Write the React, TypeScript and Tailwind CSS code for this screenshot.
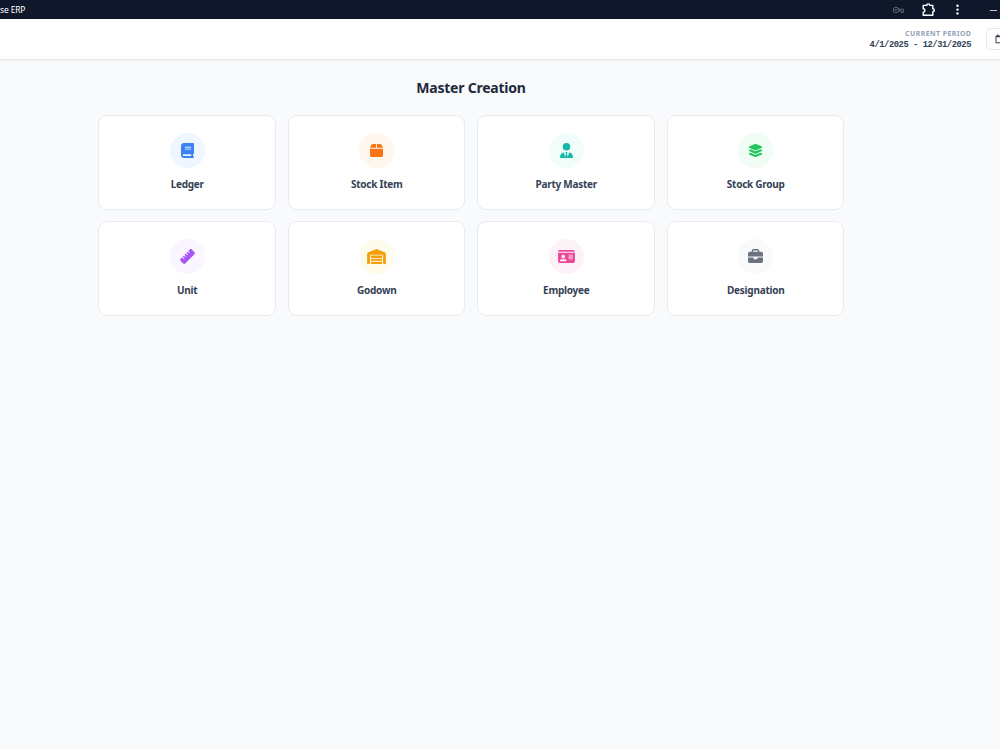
import React from "react";
import {
    FaBook,
    FaBox,
    FaBriefcase,
    FaIdCard,
    FaLayerGroup,
    FaRuler,
    FaUserTie,
    FaWarehouse,
} from "react-icons/fa6";

const masters = [
    { label: "Ledger", icon: FaBook, color: "text-[#3b82f6]", bg: "bg-[#eff6ff]", size: "w-[13px]" },
    { label: "Stock Item", icon: FaBox, color: "text-[#f97316]", bg: "bg-[#fff7ed]", size: "w-[13px]" },
    { label: "Party Master", icon: FaUserTie, color: "text-[#14b8a6]", bg: "bg-[#f0fdfa]", size: "w-[13px]" },
    { label: "Stock Group", icon: FaLayerGroup, color: "text-[#22c55e]", bg: "bg-[#f0fdf4]", size: "w-[15px]" },
    { label: "Unit", icon: FaRuler, color: "text-[#a855f7]", bg: "bg-[#faf5ff]", size: "w-[15px]" },
    { label: "Godown", icon: FaWarehouse, color: "text-[#f59e0b]", bg: "bg-[#fffbeb]", size: "w-[19px]" },
    { label: "Employee", icon: FaIdCard, color: "text-[#ec4899]", bg: "bg-[#fdf2f8]", size: "w-[17px]" },
    { label: "Designation", icon: FaBriefcase, color: "text-[#6b7280]", bg: "bg-[#f9fafb]", size: "w-[15px]" },
];

const TitleBar = () => {
    return (
        <div className="h-[19px] bg-[#0f172a] flex items-center justify-between text-white">
            <span className="text-[8.5px] leading-none tracking-[-0.15px] pt-px">se ERP</span>
            <div className="flex items-center h-full">
                {/* Saved password key */}
                <svg className="w-3 h-2 mr-[17px] text-[#626978]" viewBox="0 0 12 8" fill="none" stroke="currentColor">
                    <circle cx="3.9" cy="4" r="2.7" />
                    <circle cx="3.9" cy="4" r="0.9" fill="currentColor" stroke="none" />
                    <path d="M6.6 3.2h4.7v3.3H9.2V4.8H6.4" />
                </svg>
                {/* Extensions */}
                <svg className="w-[14px] h-[14px] mr-[21px]" viewBox="0 0 14 14" fill="none" stroke="currentColor" strokeWidth="1.4" strokeLinejoin="round">
                    <path d="M2.2 2.4h3.6a1.5 1.5 0 0 1 3 0h3v3.4a1.5 1.5 0 0 1 0 3v3.5H2.2V9.2a1.7 1.7 0 0 0 0-3.4z" />
                </svg>
                <svg className="w-[3px] h-[11px] mr-[31px]" viewBox="0 0 3 11" fill="currentColor">
                    <circle cx="1.5" cy="1.8" r="1.2" />
                    <circle cx="1.5" cy="5.6" r="1.2" />
                    <circle cx="1.5" cy="9.4" r="1.2" />
                </svg>
                <div className="w-[7px] h-px mr-[3px] mt-px bg-[#c3c6cd]" />
            </div>
        </div>
    );
};

const Header = () => {
    return (
        <div className="h-[41px] bg-white border-b border-[#e2e5ea] shadow-[0_1px_1px_rgba(0,0,0,0.03)] flex items-center justify-end">
            <div className="text-right mr-[15px]">
                <p className="text-[7px] leading-[11px] font-bold tracking-[0.4px] -mr-[0.4px] text-[#94a3b8]">CURRENT PERIOD</p>
                <p className="font-['Liberation_Mono',monospace] text-[8.8px] leading-[12px] font-bold tracking-[-0.45px] text-[#334155] whitespace-pre">
                    4/1/2025 - 12/31/2025
                </p>
            </div>
            {/* Date button runs past the right edge of the window */}
            <div className="w-[14px] h-[22px] border border-r-0 border-[#e2e8f0] rounded-l-[5px] flex items-center pl-2 overflow-hidden">
                <svg className="w-[9px] h-[10px] shrink-0 text-[#334155]" viewBox="0 0 9 10" fill="none" stroke="currentColor">
                    <path d="M1 2h7v6.8H1z" />
                    <path d="M1 2.7h7M2.6.5v1.6M6.4.5v1.6" strokeWidth="1.3" />
                </svg>
            </div>
        </div>
    );
};

const App = () => {
    return (
        <div className="h-screen overflow-hidden bg-[#f8fafc] font-['Noto_Sans','Open_Sans',sans-serif]">
            <TitleBar />
            <Header />

            <div className="w-[746px] ml-[98px] pt-[17px]">
                <h1 className="text-[14px] leading-[22px] font-bold tracking-[-0.22px] text-center text-[#1e293b] mb-4">
                    Master Creation
                </h1>

                {/* Master cards */}
                <div className="grid grid-cols-4 gap-x-3 gap-y-[11px]">
                    {masters.map(({ label, icon: Icon, color, bg, size }) => (
                        <div
                            key={label}
                            className="h-[95px] bg-white border border-[#e8ebef] rounded-[9px] flex flex-col items-center pt-[17px] pl-px"
                        >
                            <div className={`w-[35px] h-[35px] rounded-full flex items-center justify-center ${bg} ${color}`}>
                                <Icon className={`h-[15px] ${size}`} />
                            </div>
                            <span className="mt-[9px] text-[10px] leading-[15px] font-bold tracking-[-0.25px] text-[#334155]">{label}</span>
                        </div>
                    ))}
                </div>
            </div>
        </div>
    );
};

export default App;
